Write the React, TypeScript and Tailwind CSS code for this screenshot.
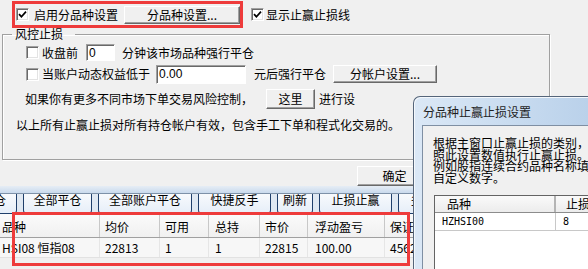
import React from "react";

const Check = ({ checked }: { checked?: boolean }) => (
  <span className="flex h-[13px] w-[13px] shrink-0 items-center justify-center border border-t-[#a0a0a0] border-l-[#a0a0a0] border-r-white border-b-white bg-white shadow-[inset_1px_1px_0_#696969,inset_-1px_-1px_0_#e3e3e3]">
    {checked && (
      <svg width="9" height="9" viewBox="0 0 9 9">
        <path d="M1 4.2 L3.4 6.7 L8 1.6" stroke="#000" strokeWidth="1.7" fill="none" />
      </svg>
    )}
  </span>
);

const Btn = ({ children, className }: { children: React.ReactNode; className: string }) => (
  <div
    className={`flex shrink-0 items-center justify-center border border-t-white border-l-white border-r-[#696969] border-b-[#696969] bg-[#f0f0f0] shadow-[inset_-1px_-1px_0_#a0a0a0] ${className}`}
  >
    {children}
  </div>
);

const Edit = ({ value, className }: { value: string; className: string }) => (
  <div
    className={`flex shrink-0 items-center border border-t-[#a0a0a0] border-l-[#a0a0a0] border-r-white border-b-white bg-white pl-[2px] font-['Liberation_Sans',sans-serif] text-[12px] shadow-[inset_1px_1px_0_#696969] ${className}`}
  >
    {value}
  </div>
);

const ToolBtn = ({ label, className }: { label: string; className: string }) => (
  <div
    className={`flex h-[28px] shrink-0 items-center justify-center rounded-b-[4px] border-x border-b border-[#1f3f6b] bg-gradient-to-b from-[#ffffff] to-[#e6eef8] ${className}`}
  >
    {label}
  </div>
);

const cols = [
  { h: "品种", v: "HSI08 恒指08", w: "w-[100px] pl-[2px]" },
  { h: "均价", v: "22813", w: "w-[60px] pl-[5px]" },
  { h: "可用", v: "1", w: "w-[49px] pl-[5px]" },
  { h: "总持", v: "1", w: "w-[51px] pl-[6px]" },
  { h: "市价", v: "22815", w: "w-[48px] pl-[5px]" },
  { h: "浮动盈亏", v: "100.00", w: "w-[77px] pl-[7px]" },
  { h: "保证金", v: "4562", w: "w-[90px] pl-[5px]" },
];

export default function App() {
  return (
    <div className="relative h-[269px] w-[588px] overflow-hidden bg-[#f0f0f0] font-['Noto_Sans_CJK_SC',sans-serif] text-[12px] leading-[14px] text-black">
      {/* main settings dialog */}
      <div className="flex h-[27px] items-center pt-[2px]">
        <div className="ml-[12px] flex h-[27px] w-[231px] items-center border-[3px] border-[#ee3b3b] pl-[1px]">
          <Check checked />
          <span className="ml-[5px]">启用分品种设置</span>
          <Btn className="ml-[6px] h-[18px] w-[116px]">分品种设置...</Btn>
        </div>
        <div className="ml-[8px] flex items-center">
          <Check checked />
          <span className="ml-[2px]">显示止赢止损线</span>
        </div>
      </div>

      <fieldset className="ml-[2px] h-[133px] w-[548px] border border-[#a0a0a0] shadow-[inset_1px_1px_0_#fff,1px_1px_0_#fff]">
        <legend className="ml-[9px] px-[3px] pr-[12px] leading-[14px]">风控止损</legend>
        <div className="mt-[3px] flex h-[17px] items-center pl-[23px]">
          <Check />
          <span className="ml-[3px]">收盘前</span>
          <Edit value="0" className="ml-[8px] h-[17px] w-[29px]" />
          <span className="ml-[7px]">分钟该市场品种强行平仓</span>
        </div>
        <div className="mt-[3px] flex h-[20px] items-center pl-[23px]">
          <Check />
          <span className="ml-[3px]">当账户动态权益低于</span>
          <Edit value="0.00" className="ml-[6px] h-[19px] w-[90px]" />
          <span className="ml-[8px]">元后强行平仓</span>
          <Btn className="ml-[7px] h-[18px] w-[104px]">分帐户设置...</Btn>
        </div>
        <div className="mt-[5px] flex h-[20px] items-center pl-[22px]">
          <span>如果你有更多不同市场下单交易风险控制，</span>
          <Btn className="ml-[13px] h-[20px] w-[49px]">这里</Btn>
          <span className="ml-[4px]">进行设</span>
        </div>
        <div className="mt-[9px] pl-[13px]">以上所有止赢止损对所有持仓帐户有效，包含手工下单和程式化交易的。</div>
      </fieldset>

      <Btn className="ml-[357px] mt-[6px] h-[20px] w-[75px]">确定</Btn>

      {/* main window frame strip */}
      <div className="h-[7px] bg-gradient-to-b from-[#e6edf5] to-[#c9daed]" />

      {/* toolbar */}
      <div className="h-[21px] overflow-hidden border-t border-[#7d91a8] bg-[#dfe8f2]">
        <div className="-mt-[8px] flex gap-[6px]">
          <ToolBtn label="一键平仓" className="-ml-[43px] w-[60px] !justify-end pr-[10px]" />
          <ToolBtn label="全部平仓" className="w-[69px]" />
          <ToolBtn label="全部账户平仓" className="w-[94px]" />
          <ToolBtn label="快捷反手" className="w-[73px]" />
          <ToolBtn label="刷新" className="w-[36px]" />
          <ToolBtn label="止损止赢" className="w-[73px]" />
          <ToolBtn label="多单平仓" className="w-[73px]" />
        </div>
      </div>

      {/* positions table */}
      <div className="flex h-[24px] border-b border-[#a0a0a0] bg-gradient-to-b from-[#fbfbfb] to-[#f0f0f0]">
        {cols.map((c) => (
          <div key={c.h} className={`flex shrink-0 items-center border-r border-[#c8c8c8] pt-[2px] ${c.w}`}>
            {c.h}
          </div>
        ))}
      </div>
      <div className="flex h-[20px] border-b border-[#e2e2e2] bg-[#f7f7f7]">
        {cols.map((c) => (
          <div key={c.h} className={`flex shrink-0 items-center border-r border-[#e6e6e6] ${c.w}`}>
            {c.v}
          </div>
        ))}
      </div>

      {/* highlight box over the table */}
      <div className="absolute left-[12px] top-[212px] h-[54px] w-[398px] border-[3px] border-[#ee3b3b]" />

      {/* child dialog */}
      <div className="absolute left-[413px] top-[96px] h-[190px] w-[190px] rounded-tl-[7px] border-l border-t border-[#55657a] bg-gradient-to-r from-[#dbe8f6] via-[#c9dcf0] to-[#b7cfe9] pl-[8px] shadow-[inset_1px_1px_0_#f4f8fc]">
        <div className="h-[28px] pl-[1px] pt-[8px] leading-[14px] text-[#1e1e1e]">分品种止赢止损设置</div>
        <div className="h-full border-l border-t border-[#7f8fa3] bg-[#f0f0f0] pl-[10px] pt-[11px]">
          <div className="whitespace-nowrap leading-[11.5px]">
            <div>根据主窗口止赢止损的类别，</div>
            <div>照此设置数值执行止赢止损。</div>
            <div>例如股指连续合约品种名称填</div>
            <div>自定义数字。</div>
          </div>
          <div className="ml-[1px] mt-[12px] h-[120px] border-l border-t border-[#646464] bg-white">
            <div className="flex h-[17px] border-b border-[#8c8c8c] bg-gradient-to-b from-[#fafafa] to-[#ececec]">
              <div className="flex w-[121px] shrink-0 items-center border-r-2 border-[#b4b4b4] pl-[12px]">品种</div>
              <div className="flex items-center pl-[10px]">止损</div>
            </div>
            <div className="flex h-[18px] border-b border-[#c8c8c8] font-['DejaVu_Sans_Mono',monospace] text-[10px]">
              <div className="flex w-[121px] shrink-0 items-center border-r border-[#c8c8c8] pl-[7px]">HZHSI00</div>
              <div className="flex items-center pl-[7px]">8</div>
            </div>
          </div>
        </div>
      </div>
    </div>
  );
}
